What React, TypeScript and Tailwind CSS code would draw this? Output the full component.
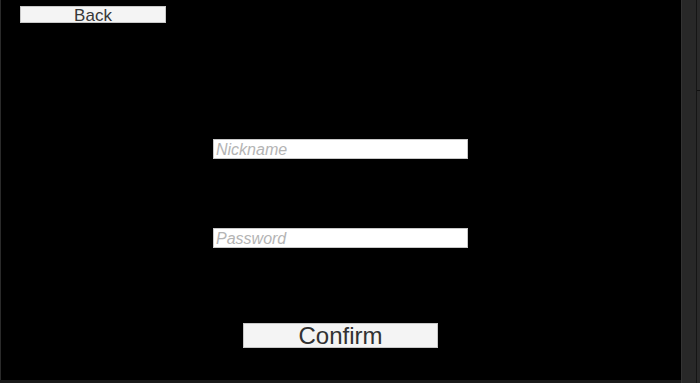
import React from "react";

export default function App() {
  return (
    <div className="flex h-[383px] w-[700px] overflow-hidden bg-[#191919]" style={{ fontFamily: '"Liberation Sans", Arial, sans-serif' }}>
      <div className="flex h-[380px] w-[681px] flex-col border-l border-[#2a2a2a] bg-black">
        <div className="pl-[19px] pt-[6px]">
          <button className="flex h-[17px] w-[146px] items-center justify-center border border-[#c8c8c8] bg-[#f4f4f4] pt-[1px] text-[17px] leading-none text-[#383838]">
            Back
          </button>
        </div>
        <div className="flex flex-col items-center pr-[1px]">
          <div className="mt-[116px] flex h-[20px] w-[255px] items-center border border-[#c8c8c8] bg-white pl-[2px] pt-[2px]">
            <span className="text-[16px] italic leading-none text-[#b4b4b4]">Nickname</span>
          </div>
          <div className="mt-[69px] flex h-[20px] w-[255px] items-center border border-[#c8c8c8] bg-white pl-[2px] pt-[2px]">
            <span className="text-[16px] italic leading-none text-[#b4b4b4]">Password</span>
          </div>
          <button className="mt-[75px] flex h-[25px] w-[195px] items-center justify-center border border-[#c8c8c8] bg-[#f4f4f4] text-[24px] leading-none text-[#323232]">
            Confirm
          </button>
        </div>
      </div>
      <div className="flex h-[383px] flex-1">
        <div className="h-full w-[15px] border-l border-[#333333] bg-[#282828]" />
        <div className="h-full w-[1px] bg-[#151515]" />
        <div className="relative h-full flex-1 bg-[#2a2a2a]">
          <div className="absolute left-0 top-[90px] h-[1px] w-full bg-[#111111]" />
        </div>
      </div>
    </div>
  );
}
